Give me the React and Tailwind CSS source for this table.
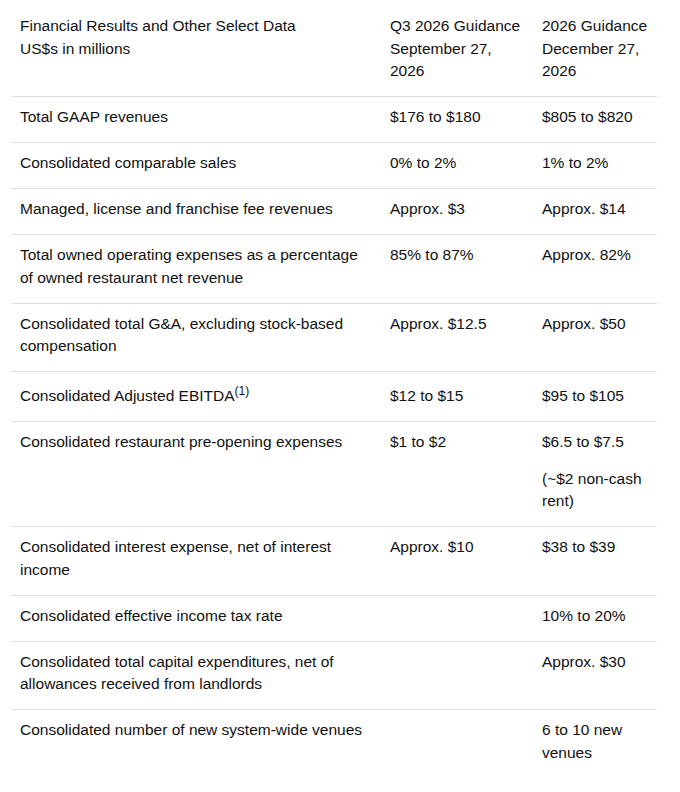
import React from "react";

const rows = [
  { label: "Total GAAP revenues", q3: "$176 to $180", year: ["$805 to $820"] },
  { label: "Consolidated comparable sales", q3: "0% to 2%", year: ["1% to 2%"] },
  {
    label: "Managed, license and franchise fee revenues",
    q3: "Approx. $3",
    year: ["Approx. $14"],
  },
  {
    label:
      "Total owned operating expenses as a percentage of owned restaurant net revenue",
    q3: "85% to 87%",
    year: ["Approx. 82%"],
  },
  {
    label: "Consolidated total G&A, excluding stock-based compensation",
    q3: "Approx. $12.5",
    year: ["Approx. $50"],
  },
  {
    label: "Consolidated Adjusted EBITDA",
    sup: "(1)",
    q3: "$12 to $15",
    year: ["$95 to $105"],
  },
  {
    label: "Consolidated restaurant pre-opening expenses",
    q3: "$1 to $2",
    year: ["$6.5 to $7.5", "(~$2 non-cash rent)"],
  },
  {
    label: "Consolidated interest expense, net of interest income",
    q3: "Approx. $10",
    year: ["$38 to $39"],
  },
  {
    label: "Consolidated effective income tax rate",
    q3: "",
    year: ["10% to 20%"],
  },
  {
    label:
      "Consolidated total capital expenditures, net of allowances received from landlords",
    q3: "",
    year: ["Approx. $30"],
  },
  {
    label: "Consolidated number of new system-wide venues",
    q3: "",
    year: ["6 to 10 new venues"],
  },
];

// baseline so the superscript row pushes every cell down together
const cell =
  "pl-[9px] pr-[7px] pt-[9px] pb-[13.5px] align-baseline text-left font-normal";

const App = () => {
  return (
    <div
      className="min-h-[792px] w-[680px] bg-white pt-[6px] pl-[11px] text-[15.5px] leading-[22.5px] text-[#111]"
      style={{ fontFamily: '"Liberation Sans", Arial, sans-serif' }}
    >
      <table className="w-[646px] table-fixed border-collapse">
        <colgroup>
          <col className="w-[370px]" />
          <col className="w-[152px]" />
          <col className="w-[124px]" />
        </colgroup>
        <thead>
          <tr>
            <th className={cell}>
              Financial Results and Other Select Data
              <br />
              US$s in millions
            </th>
            <th className={cell}>Q3 2026 Guidance September 27, 2026</th>
            <th className={cell}>2026 Guidance December 27, 2026</th>
          </tr>
        </thead>
        <tbody>
          {rows.map((row) => (
            <tr key={row.label} className="border-t border-[#e0e0e0]">
              <td className={cell}>
                {row.label}
                {row.sup && (
                  <sup className="relative top-0 align-super text-[12px] leading-[21px]">
                    {row.sup}
                  </sup>
                )}
              </td>
              <td className={cell}>{row.q3}</td>
              <td className={cell}>
                {row.year.map((line, i) => (
                  <p key={line} className={i > 0 ? "mt-[14px]" : ""}>
                    {line}
                  </p>
                ))}
              </td>
            </tr>
          ))}
        </tbody>
      </table>
    </div>
  );
};

export default App;
